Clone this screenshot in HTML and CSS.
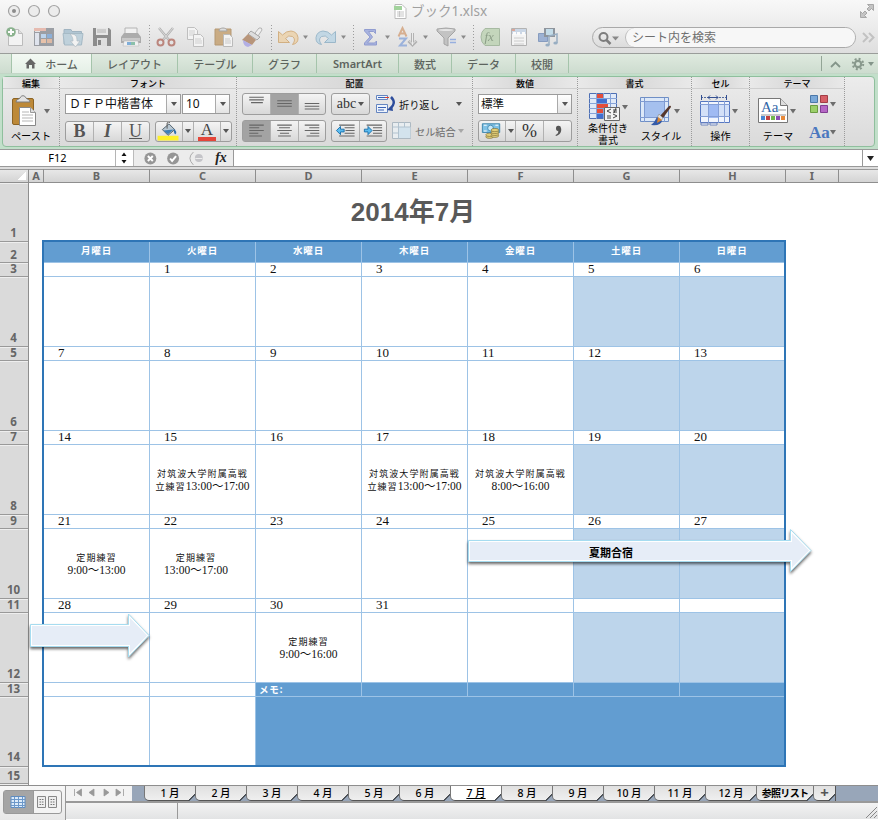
FILE: index.html
```html
<!DOCTYPE html>
<html lang="ja">
<head>
<meta charset="utf-8">
<title>ブック1.xlsx</title>
<link rel="stylesheet" href="styles.css">
</head>
<body>
<div class="window">
  <header class="chrome">
    <div class="titlebar">
      <svg width="70" height="22" viewBox="0 0 70 22"><g fill="#ececec" stroke="#a3a3a3" stroke-width="1.2"><circle cx="14" cy="11" r="5.5"/><circle cx="34" cy="11" r="5.5"/><circle cx="54" cy="11" r="5.5"/></g><circle cx="14" cy="11" r="2" fill="#8c8c8c"/></svg>
      <div class="doc-title">
        <svg width="14" height="16" viewBox="393 3 14 16"><path d="M395 4.500h7l4 4v10h-11z" fill="#fff" stroke="#bbb"/><path d="M394 6h8v4h-8z" fill="#a2d29c"/><path d="M397 12h7M397 14h7M397 16h7M399.500 11v6" stroke="#c6c6c6"/></svg>
        <span>ブック1.xlsx</span>
      </div>
      <svg width="24" height="22" viewBox="854 0 24 22"><path d="M867.500 4.500h6v6l-2-2-2.500 2.500-2-2 2.500-2.500zM860.500 11.500v6h6l-2-2 2.500-2.500-2-2-2.500 2.500z" fill="#c4c4c4" stroke="#999" stroke-width=".8"/></svg>
    </div>
    <div class="toolbar">
      <svg width="29" height="31" viewBox="0 22 29 31"><path d="M8.500 29.500h10l4 4v12h-14z" fill="#f6f6f6" stroke="#b5b5b5"/><path d="M18.500 29.500v4h4" fill="#ddd" stroke="#b5b5b5"/><circle cx="11" cy="32" r="4.800" fill="#7aa97e"/><path d="M11 29v6M8 32h6" stroke="#fff" stroke-width="2"/></svg>
      <svg width="29" height="31" viewBox="29 22 29 31"><path d="M34 28h20v18H34z" fill="#8e9299"/><path d="M35 29h5v3h-5z" fill="#e5e5e5"/><path d="M34 28h12v3H34z" fill="#e6b3a6"/><path d="M35 33h4v12h-4z" fill="#dfe4ef"/><path d="M41 34h5v4h-5z" fill="#b4d0ee"/><path d="M47 34h5v4h-5z" fill="#7da6d5"/><path d="M41 39h5v4h-5z" fill="#e8bda0"/><path d="M47 39h5v4h-5z" fill="#dbb29a"/></svg>
      <svg width="29" height="31" viewBox="58 22 29 31"><path d="M64 31v-1.500h7l1 2h9.500V44H64z" fill="#a8c0d0" stroke="#94abbb"/><path d="M63 33.500h20L81.500 45h-17z" fill="#b9ceda" stroke="#9bb2c0"/><path d="M70 34c6 0 7 2 7 7h3l-4.500 6-5-6H73c0-3-1-5-3-7z" fill="#f5f5f5" stroke="#a6b3bb" stroke-width=".7"/></svg>
      <svg width="29" height="31" viewBox="87 22 29 31"><path d="M93 28h16l2 2v16H93z" fill="#7e7e7e"/><path d="M96 28h12v7H96z" fill="#e6e6e6"/><path d="M97 30h9M97 32h9" stroke="#aaa"/><path d="M97 38h10v8H97z" fill="#ddd"/><path d="M98 40h3v5h-3z" fill="#777"/></svg>
      <svg width="29" height="31" viewBox="116 22 29 31"><path d="M125 28h12v8h-12z" fill="#f3f3f3" stroke="#aaa"/><path d="M124 33h14l3 4v6h-20v-6z" fill="#a2a2a2"/><path d="M122 38h18v3h-18z" fill="#c4c4c4"/><path d="M124 41h14l1 5h-16z" fill="#f4f4f4" stroke="#aaa" stroke-width=".5"/><path d="M127 42h4v3h-4z" fill="#6fa5d8"/><path d="M131 42h4v3h-4z" fill="#7cbaa1"/></svg>
      <svg width="7" height="31" viewBox="145 22 7 31"><path class="dots" d="M149.500 25v25"/></svg>
      <svg width="29" height="31" viewBox="152 22 29 31"><path d="M159 28l10 12M173 28l-10 12" stroke="#a9a9a9" stroke-width="2.500"/><path d="M159 28l10 12M173 28l-10 12" stroke="#e5e5e5" stroke-width=".8"/><g fill="none" stroke="#b5766c" stroke-width="2"><ellipse cx="160.500" cy="42.500" rx="3" ry="3"/><ellipse cx="171.500" cy="42.500" rx="3" ry="3"/></g></svg>
      <svg width="29" height="31" viewBox="181 22 29 31"><g fill="#f6f6f6" stroke="#b8b8b8"><path d="M187.500 27.500h7l3 3v9h-10z"/><path d="M193.500 34.500h7l3 3v9h-10z"/></g><path d="M189 31h6M189 33h6M189 35h4M195 39h6M195 41h7M195 43h7" stroke="#ccc"/></svg>
      <svg width="29" height="31" viewBox="210 22 29 31"><path d="M215 29h16v16h-16z" fill="#c5a273" stroke="#ac8b60"/><path d="M219 31c0-4 8-4 8 0z" fill="#ddd" stroke="#999"/><path d="M223.500 34.500h6l3 3v9h-9z" fill="#f6f6f6" stroke="#b4b4b4"/><path d="M225 39h5M225 41h6M225 43h6" stroke="#c5c5c5"/></svg>
      <svg width="28" height="31" viewBox="239 22 28 31"><path d="M255 33l4-5q3-1 3 2l-4 6z" fill="#f0f0f0" stroke="#aaa"/><path d="M251 31l9 6-3 3-9-6z" fill="#ddd" stroke="#9b9b9b"/><path d="M248 34l8 6-4 5-10-5z" fill="#b08868"/><path d="M243 40l9 5-4 2q-5-1-5-7z" fill="#aaa6e5"/></svg>
      <svg width="7" height="31" viewBox="267 22 7 31"><path class="dots" d="M271.500 25v25"/></svg>
      <svg width="28" height="31" viewBox="274 22 28 31"><path d="M278.500 31.500v11h11l-4-4q3-4 7-2 4 3 0 8 6-1 5.500-7-1-6-7-6.500-5 0-8.500 4z" fill="#ecd2ab" stroke="#cfa772"/></svg>
      <svg width="8" height="31" viewBox="302 22 8 31"><path class="caret" d="M303 35.500h5l-2.500 3.500z"/></svg>
      <svg width="30" height="31" viewBox="310 22 30 31"><path d="M335.500 31.500v11h-11l4-4q-3-4-7-2-4 3 0 8-6-1-5.500-7 1-6 7-6.500 5 0 8.500 4z" fill="#bcd5e4" stroke="#8fb0c5"/></svg>
      <svg width="8" height="31" viewBox="340 22 8 31"><path class="caret" d="M341 35.500h5l-2.500 3.500z"/></svg>
      <svg width="10" height="31" viewBox="348 22 10 31"><path class="dots" d="M353.500 25v25"/></svg>
      <svg width="24" height="31" viewBox="358 22 24 31"><path d="M364.500 29.500h11v4l-2-2h-5l4 5.500-5 6h7l2-2v4h-12v-2l5.500-6-5.500-6z" fill="#9daade" stroke="#8290cc"/></svg>
      <svg width="10" height="31" viewBox="382 22 10 31"><path class="caret" d="M385 35.500h5l-2.500 3.500z"/></svg>
      <svg width="29" height="31" viewBox="392 22 29 31"><path d="M398.500 36.500l4-8.500 4 8.500M400 33.500h5" fill="none" stroke="#d3a581" stroke-width="2"/><path d="M399 38.500h7l-6 7h7" fill="none" stroke="#8faada" stroke-width="2"/><path d="M412.500 33v12m-4-4l4 4 4-4" fill="none" stroke="#aaa" stroke-width="3"/><path d="M412.500 33v12m-3-4l3 3 3-3" fill="none" stroke="#eee"/></svg>
      <svg width="9" height="31" viewBox="421 22 9 31"><path class="caret" d="M423 35.500h5l-2.500 3.500z"/></svg>
      <svg width="29" height="31" viewBox="430 22 29 31"><path d="M437 29q9-2 18 0v2l-7 7v8l-4-2v-6l-7-7z" fill="#bdbdbd" stroke="#999"/><ellipse cx="446" cy="30" rx="7" ry="1" fill="#e5e5e5"/><path d="M450 39.500h6M450 42.500h6" stroke="#8aa6df" stroke-width="1.700"/></svg>
      <svg width="9" height="31" viewBox="459 22 9 31"><path class="caret" d="M461 35.500h5l-2.500 3.500z"/></svg>
      <svg width="11" height="31" viewBox="468 22 11 31"><path class="dots" d="M473.500 25v25"/></svg>
      <svg width="22" height="31" viewBox="479 22 22 31"><path d="M485 28.500h14.500v17H485q-4-3-4-8.500t4-8.500z" fill="#bed3b5" stroke="#9cb296"/><text x="484.500" y="41" class="fx-green">fx</text></svg>
      <svg width="35" height="31" viewBox="501 22 35 31"><path d="M511.500 28.500h15v17h-15z" fill="#f7f7f7" stroke="#aaa"/><path d="M512 29h14v5h-14z" fill="#c6d4e6"/><path d="M512 29h3v2h-3z" fill="#d99b8b"/><path d="M513 32h3v3h-3zm4 0h3v3h-3zm5 0h3v3h-3z" fill="#fff"/><path d="M514 38h10M514 41h10M514 44h10" stroke="#c8c8c8"/></svg>
      <svg width="24" height="31" viewBox="536 22 24 31"><path d="M538.500 33.500h9v8h-9z" fill="#91a9d0" stroke="#7790b9"/><path d="M544 28h11v9h-11z" fill="#7f8790"/><path d="M546 29h7v6h-7z" fill="#bddae9"/><path d="M549 45V36l8-2v9" fill="none" stroke="#8ca5bd" stroke-width="1.500"/><ellipse cx="547.500" cy="45" rx="2.200" ry="1.500" fill="#8ca5bd"/><ellipse cx="555.500" cy="43" rx="2.200" ry="1.500" fill="#8ca5bd"/></svg>
      <div class="search">
        <svg width="32" height="20" viewBox="592 27 32 20"><circle cx="602.500" cy="36" r="4" fill="none" stroke="#7d7d7d" stroke-width="2"/><path d="M605.500 39l4 4" stroke="#7d7d7d" stroke-width="2.500"/><path d="M611 35.500h7l-3.500 4z" fill="#888"/></svg>
        <div class="search-field">シート内を検索</div>
      </div>
      <svg width="21" height="31" viewBox="857 22 21 31"><path d="M863 33l4.500 4.500-4.500 4.500M869 33l4.500 4.500-4.500 4.500" fill="none" stroke="#bcbcbc" stroke-width="2"/></svg>
    </div>
  </header>

  <nav class="tabs">
    <div class="tab t0"></div>
    <div class="tab t1 active"><svg width="11" height="11" viewBox="0 0 11 11"><path d="M5.500.5L0 6h1.500v4.500H4V7h3v3.500h2.500V6H11z" fill="#666"/></svg>ホーム</div>
    <div class="tab t2">レイアウト</div>
    <div class="tab t3">テーブル</div>
    <div class="tab t4">グラフ</div>
    <div class="tab t5 latin">SmartArt</div>
    <div class="tab t6">数式</div>
    <div class="tab t7">データ</div>
    <div class="tab t8">校閲</div>
    <svg class="tab-tools" width="58" height="20" viewBox="820 54 58 20"><path d="M821.500 56v15" stroke="#93a596"/><path d="M831 67l4.500-4.500 4.500 4.500" fill="none" stroke="#84958a" stroke-width="1.800"/><circle cx="858" cy="64" r="3.200" fill="none" stroke="#89998d" stroke-width="2.200"/><circle cx="858" cy="64" r="5.200" fill="none" stroke="#89998d" stroke-width="2" stroke-dasharray="2 2.080"/><path d="M868 62h6l-3 4z" fill="#84958a"/></svg>
  </nav>

  <section class="ribbon">
    <div class="panel">
      <div class="group g1"><h2>編集</h2>
        <div class="paste"><svg width="48" height="34" viewBox="7 94 48 34"><rect x="12.500" y="98.500" width="21" height="26" rx="1.500" fill="#bd8938" stroke="#8c6425"/><path d="M16 102c0-3 4-3 4-4 1-3 5-3 6 0 0 1 4 1 4 4z" fill="#e2e2e2" stroke="#7d7d7d"/><path d="M19.500 107.500h11l5 5v13h-16z" fill="#fff" stroke="#888"/><path d="M30.500 107.500v5h5" fill="#ddd" stroke="#999"/><path d="M22 112h7M22 115h11M22 118h11M22 121h11" stroke="#b5b5b5"/><path class="arrow" d="M44 109h6l-3 4.500z"/></svg><span>ペースト</span></div>
      </div>
      <div class="group g2"><h2>フォント</h2>
        <div class="line"><div class="combo font-name"><span>ＤＦＰ中楷書体</span><i></i></div><div class="combo font-size"><span>10</span><i></i></div></div>
        <div class="line second">
          <div class="buttons"><b class="w28 serif">B</b><b class="w28 serif italic">I</b><b class="w27 serif under">U</b></div>
          <div class="buttons"><b class="w27"><svg width="26" height="20" viewBox="155 121 26 20"><path d="M156 135.500h22v5h-22z" fill="#fdf02c"/><path d="M161 129l7-6 6 6-7 6z" fill="#b8c7d2" stroke="#50616d"/><path d="M162 130l11-1-6 5z" fill="#3d7fb9"/><path d="M173 128q4 3 2 6-2 0-2-6z" fill="#2e6faf"/><path d="M166 128v-6q2-2 3 0" fill="none" stroke="#555"/></svg></b><b class="w11"><i></i></b><b class="w27 serif red"><span>A</span></b><b class="w10"><i></i></b></div>
        </div>
      </div>
      <div class="group g3"><h2>配置</h2>
        <div class="line">
          <div class="buttons tall"><b class="w28"><svg width="28" height="22" viewBox="0 0 28 22"><path class="bars" d="M6 3.500h16M6 6.500h16M8 9.500h13"/></svg></b><b class="w28 pressed"><svg width="28" height="22" viewBox="0 0 28 22"><path class="bars" d="M6 7.500h16M6 10.500h16M6 13.500h16"/></svg></b><b class="w26"><svg width="28" height="22" viewBox="0 0 28 22"><path class="bars" d="M6 10.500h16M6 13.500h16M6 16.500h16"/></svg></b></div>
          <div class="buttons tall"><b class="w38 abc">abc<i></i></b></div>
          <svg class="wrap-icon" width="22" height="22" viewBox="375 93 22 22"><path d="M376.500 95.500h11v4h-11zM376.500 104.500h11v8h-11z" fill="#eef4fc" stroke="#6585c0"/><path d="M378 97.500h8M378 107.500h8M378 110h6" stroke="#3a62b5"/><path d="M385 97.500h4" stroke="#d43"/><path d="M391 97q6 6-1 12" fill="none" stroke="#2d4d9c" stroke-width="2.500"/><path d="M387 110l5-5 1 6z" fill="#2d4d9c"/></svg>
          <span class="cmd">折り返し</span><i class="tri far"></i>
        </div>
        <div class="line second">
          <div class="buttons tall"><b class="w28 pressed"><svg width="28" height="22" viewBox="0 0 28 22"><path class="bars" d="M6 4.500h16M6 7.500h11M6 10.500h16M6 13.500h10M6 16.500h14"/></svg></b><b class="w28"><svg width="28" height="22" viewBox="0 0 28 22"><path class="bars" d="M6 4.500h16M8 7.500h12M6 10.500h16M9 13.500h10M7 16.500h14"/></svg></b><b class="w26"><svg width="28" height="22" viewBox="0 0 28 22"><path class="bars" d="M6 4.500h16M11 7.500h11M6 10.500h16M12 13.500h10M8 16.500h14"/></svg></b></div>
          <div class="buttons tall"><b class="w28"><svg width="28" height="22" viewBox="0 0 28 22"><path class="bars" d="M7 4.500h17M13 7.500h11M14 10.500h10M13 13.500h11M7 16.500h17"/><path d="M4 10.500l4.500-4.500v3h4v3h-4v3z" fill="#5bbcf0" stroke="#176ca8"/></svg></b><b class="w26"><svg width="28" height="22" viewBox="0 0 28 22"><path class="bars" d="M7 4.500h17M14 7.500h10M14 10.500h10M14 13.500h10M7 16.500h17"/><path d="M13 10.500l-4.500-4.500v3h-4v3h4v3z" fill="#5bbcf0" stroke="#176ca8"/></svg></b></div>
          <svg class="merge-icon" width="20" height="18" viewBox="0 0 20 18"><path d="M.5.5h18v16H.5z" fill="#e8edf0" stroke="#adb9c2"/><path d="M6.500 5h12v11h-12z" fill="#d3e3ed"/><path d="M.5 5h18M6.500.5v16M12.500.5V5M.5 11h6" stroke="#b1c2cf"/></svg>
          <span class="cmd dim">セル結合</span><i class="tri dim"></i>
        </div>
      </div>
      <div class="group g4"><h2>数値</h2>
        <div class="line"><div class="combo number"><span>標準</span><i></i></div></div>
        <div class="line second"><div class="buttons tall"><b class="w27"><svg width="27" height="20" viewBox="478 121 27 20"><path d="M481.500 123.500h18v9h-18z" fill="#7fc2e6" stroke="#3f86ad"/><ellipse cx="490" cy="128" rx="3" ry="3" fill="#c8e9f7" stroke="#4a8eb5"/><path d="M483 125h3M483 131h3M495 125h3" stroke="#fff"/><g fill="#e2cf79" stroke="#80713a" stroke-width=".7"><ellipse cx="489" cy="137" rx="4" ry="1.700"/><ellipse cx="489" cy="135" rx="4" ry="1.700"/><ellipse cx="494.500" cy="136" rx="4" ry="1.700"/><ellipse cx="494.500" cy="134" rx="4" ry="1.700"/><ellipse cx="494.500" cy="132" rx="4" ry="1.700"/><ellipse cx="494.500" cy="130" rx="4" ry="1.700"/></g></svg></b><b class="w10"><i></i></b><b class="w28 percent">%</b><b class="w27"><svg width="10" height="12" viewBox="0 0 10 12"><path d="M3 3.500a2.500 2.500 0 0 1 5-.5c1 3.500-1 7-5 8-.8-.6-.3-1 0-1.200 2-1 2.500-2.300 2.200-4C4 6.200 3 5 3 3.500z" fill="#555"/></svg></b></div></div>
      </div>
      <div class="group g5"><h2>書式</h2>
        <div class="pair">
          <div class="big two"><svg width="50" height="30" viewBox="583 93 50 30"><path d="M589.500 94.500h27v25h-27z" fill="#e1eaf8" stroke="#4e70b4"/><path d="M589 99.500h28M589 104.500h28M589 109.500h28M589 114.500h28M596.500 94v26M603.500 94v26M610.500 94v26" stroke="#86a3d8"/><path d="M597 95h6v4h-6zM597 105h11v4h-11z" fill="#e44d3b"/><path d="M597 100h10v4h-10zM597 115h6v4h-6z" fill="#426fd0"/><path d="M597 110h6v4h-6z" fill="#e44d3b"/><path d="M604.500 108.500h15v13h-15z" fill="#f4f4f4" stroke="#666"/><path d="M611 110l-4 2 4 2M613 111h4M613 113h4M616 109l-2 5M607 117h4M607 119h4M613 115l4 2-4 2" fill="none" stroke="#333" stroke-width=".9"/><path class="arrow" d="M622 106h6l-3 4.500z"/></svg><span>条件付き</span><span>書式</span></div>
          <div class="big style"><svg width="46" height="34" viewBox="639 94 46 34"><path d="M641.500 97.500h28v24h-28z" fill="#dce8f8" stroke="#6f8fc6"/><path d="M646 102h19v15h-19z" fill="#a5c0ee"/><path d="M641 101.500h28M641 117.500h28M645.500 98v24M665.500 98v24" stroke="#7f9bd2"/><path d="M672 107l-8 11-3-2 9-10q2-1 2 1z" fill="#57382c"/><path d="M660 114l4 4-2 3-4-3z" fill="#ddd" stroke="#777" stroke-width=".5"/><path d="M658 117l5 4q-1 5-11 4 4-3 6-8z" fill="#345ba8"/><path d="M659 117l4 3-5 3z" fill="#dd8730"/><path class="arrow" d="M675 109h6l-3 4.500z"/></svg><span>スタイル</span></div>
        </div>
      </div>
      <div class="group g6"><h2>セル</h2>
        <div class="big cell"><svg width="44" height="34" viewBox="699 94 44 34"><path d="M701 97.500h26" stroke="#536b9f" stroke-dasharray="2 1"/><path d="M708 97.500h10M710 95.500l-2 2 2 2M716 95.500l2 2-2 2M701.500 95v5M726.500 95v5" fill="none" stroke="#334f91"/><path d="M700.500 101.500h29v21h-29z" fill="#f1f5fd" stroke="#5677c1"/><path d="M701 104.500h28v12h-28z" fill="#d3e0f8"/><path d="M709 104h9v14h-9z" fill="#9fbaf3"/><path d="M700 104.500h30M700 116.500h30M708.500 101v22M718.500 101v22M724.500 101v22" stroke="#859fd6"/><path d="M701 123h7v2h-7zM710 123h7v2h-7z" fill="#fff" stroke="#6d84bd"/><path class="arrow" d="M732 109h6l-3 4.500z"/></svg><span>操作</span></div>
      </div>
      <div class="group g7"><h2>テーマ</h2>
        <div class="pair">
          <div class="big theme"><svg width="46" height="34" viewBox="755 94 46 34"><path d="M758.500 98.500h22l7 7v17h-29z" fill="#fff" stroke="#777"/><path d="M780.500 98.500v7h7" fill="#ddd" stroke="#777"/><text x="761" y="112" class="theme-aa">Aa</text><path d="M778 110h8M761 115h25" stroke="#ccc" stroke-width="2"/><path d="M761 116h4v4h-4z" fill="#4a87d3"/><path d="M766 116h4v4h-4z" fill="#c34242"/><path d="M771 116h4v4h-4z" fill="#72b84e"/><path d="M776 116h4v4h-4z" fill="#8b4fb4"/><path d="M781 116h4v4h-4z" fill="#e88a3a"/><path class="arrow" d="M790 109h6l-3 4.500z"/></svg><span>テーマ</span></div>
          <svg class="theme-side" width="36" height="57" viewBox="803 89 36 57"><g stroke-width="1"><path d="M810.500 95.500h7v7h-7z" fill="#7ba9d9" stroke="#4c78a9"/><path d="M820.500 95.500h7v7h-7z" fill="#d65e66" stroke="#a13d45"/><path d="M810.500 105.500h7v7h-7z" fill="#9bcf69" stroke="#6b9b42"/><path d="M820.500 105.500h7v7h-7z" fill="#b567c5" stroke="#813e91"/></g><path class="arrow" d="M830 102h6l-3 4.500zM830 130h6l-3 4.500z"/><text x="809" y="138" class="fonts-aa">Aa</text></svg>
        </div>
      </div>
    </div>
  </section>

  <div class="formula">
    <div class="name-box">F12</div>
    <svg width="17" height="16" viewBox="116 150 17 16"><path d="M121.500 156l2.500-3.500 2.500 3.500zM121.500 160l2.500 3.500 2.500-3.500z" fill="#111"/></svg>
    <svg class="fx-tools" width="100" height="16" viewBox="134 150 100 16"><circle cx="150.500" cy="158.500" r="6" fill="#969696"/><path d="M148 156l5 5M153 156l-5 5" stroke="#fff" stroke-width="2"/><circle cx="173.500" cy="158.500" r="6" fill="#969696"/><path d="M170.500 158.500l2 2.500 4-5" fill="none" stroke="#fff" stroke-width="2"/><path d="M194 152q-7 6 0 13" fill="none" stroke="#aaa"/><circle cx="199.500" cy="158" r="4" fill="#c4c4c8"/><path d="M196 158.500h7" stroke="#eee"/><text x="216" y="162" class="fx">fx</text></svg>
    <div class="formula-input"></div>
    <svg width="15" height="16" viewBox="863 150 15 16"><path d="M867 156h7l-3.500 5z" fill="#222"/></svg>
  </div>

  <div class="colheads">
    <div class="corner"></div><div class="ca">A</div><div class="cc">B</div><div class="cc">C</div><div class="cc">D</div><div class="cc">E</div><div class="cc">F</div><div class="cc">G</div><div class="cc">H</div><div class="ci">I</div><div class="cj"></div>
  </div>

  <main class="sheet">
    <div class="rowheads">
      <div>1</div><div>2</div><div>3</div><div>4</div><div>5</div><div>6</div><div>7</div><div>8</div><div>9</div><div>10</div><div>11</div><div>12</div><div>13</div><div>14</div><div>15</div><div></div>
    </div>
    <div class="canvas">
      <h1>2014年7月</h1>
      <div class="calendar">
        <div class="hd">月曜日</div><div class="hd">火曜日</div><div class="hd">水曜日</div><div class="hd">木曜日</div><div class="hd">金曜日</div><div class="hd">土曜日</div><div class="hd">日曜日</div>
        <div class="d"></div><div class="d">1</div><div class="d">2</div><div class="d">3</div><div class="d">4</div><div class="d">5</div><div class="d">6</div>
        <div class="e"></div><div class="e"></div><div class="e"></div><div class="e"></div><div class="e"></div><div class="e we"></div><div class="e we"></div>
        <div class="d">7</div><div class="d">8</div><div class="d">9</div><div class="d">10</div><div class="d">11</div><div class="d">12</div><div class="d">13</div>
        <div class="e"></div><div class="e"></div><div class="e"></div><div class="e"></div><div class="e"></div><div class="e we"></div><div class="e we"></div>
        <div class="d">14</div><div class="d">15</div><div class="d">16</div><div class="d">17</div><div class="d">18</div><div class="d">19</div><div class="d">20</div>
        <div class="e"></div><div class="e"><p>対筑波大学附属高戦<br>立練習<span>13:00～17:00</span></p></div><div class="e"></div><div class="e"><p>対筑波大学附属高戦<br>立練習<span>13:00～17:00</span></p></div><div class="e"><p>対筑波大学附属高戦<br><span>8:00～16:00</span></p></div><div class="e we"></div><div class="e we"></div>
        <div class="d">21</div><div class="d">22</div><div class="d">23</div><div class="d">24</div><div class="d">25</div><div class="d">26</div><div class="d">27</div>
        <div class="e"><p>定期練習<br><span>9:00～13:00</span></p></div><div class="e left"><p>定期練習<br><span>13:00～17:00</span></p></div><div class="e"></div><div class="e"></div><div class="e"></div><div class="e we"></div><div class="e we"></div>
        <div class="d">28</div><div class="d">29</div><div class="d">30</div><div class="d">31</div><div class="d"></div><div class="d"></div><div class="d"></div>
        <div class="e"></div><div class="e"></div><div class="e"><p>定期練習<br><span>9:00～16:00</span></p></div><div class="e"></div><div class="e"></div><div class="e we"></div><div class="e we"></div>
        <div class="d"></div><div class="d"></div><div class="memo">メモ:</div><div class="memo"></div><div class="memo"></div><div class="memo"></div><div class="memo"></div>
        <div class="e last"></div><div class="e last"></div><div class="memo-body"></div>
      </div>
      <svg class="shape camp" width="354" height="56" viewBox="464 524 354 56"><path class="edge" d="M468.500 540.500H790.500V529.500L811 550.500 790.500 571.500V561.500H468.500z"/><path class="fill" d="M470 542H792V533.500L809 550.500 792 567.500V560H470z"/></svg>
      <div class="camp-label">夏期合宿</div>
      <svg class="shape cont" width="128" height="56" viewBox="26 608 128 56"><path class="edge" d="M30.500 624.500H128.500V614L149 635.500 128.500 657V646.500H30.500z"/><path class="fill" d="M32 626H130V618L147 635.500 130 653V645H32z"/></svg>
    </div>
  </main>

  <footer class="footer">
    <div class="views"><svg width="60" height="26" viewBox="0 0 60 26"><rect x=".5" y="1.500" width="58" height="23" rx="2.500" fill="#f3f3f3" stroke="#999"/><path d="M1 2h29v22H1z" fill="#a5a5a5"/><path d="M30.500 2v22" stroke="#999"/><path d="M8 7.500h14v11H8z" fill="#dcebfa" stroke="#5f8cc0"/><path d="M8 10.500h14M8 13.500h14M8 16.500h14M11.500 8v11M15.500 8v11M19.500 8v11" stroke="#6c98ca"/><path d="M34.500 7.500h8v11h-8zM45.500 7.500h8v11h-8z" fill="#eee" stroke="#888"/><path d="M36.500 10.500h4M36.500 13h4M36.500 15.500h4M47.500 10.500h4M47.500 13h4M47.500 15.500h4" stroke="#777" stroke-dasharray="1.600 .8"/></svg></div>
    <div class="right">
      <div class="sheettabs">
        <svg width="66" height="15" viewBox="66 786 66 15"><path d="M66 786h66v15H66z" fill="#f3f3f3"/><path d="M74.500 789v7M81.500 789v7l-5-3.500zM94 789v7l-5-3.500zM104 789v7l5-3.500zM116 789v7l5-3.500zM123.500 789v7" fill="#999" stroke="#999" stroke-width=".8"/></svg>
        <div class="strip">
          <div class="st">1 月</div><div class="st">2 月</div><div class="st">3 月</div><div class="st">4 月</div><div class="st">5 月</div><div class="st">6 月</div><div class="st on">7 月</div><div class="st">8 月</div><div class="st">9 月</div><div class="st">10 月</div><div class="st">11 月</div><div class="st">12 月</div><div class="st list">参照リスト</div><div class="st plus">+</div>
        </div>
      </div>
      <div class="status"><div class="s1"></div><div class="s2"><svg width="13" height="13" viewBox="0 0 13 13"><path d="M1 12L12 1M5 12l7-7M9 12l3-3" stroke="#888"/></svg></div></div>
    </div>
  </footer>
</div>
</body>
</html>
```
FILE: styles.css
```css
* { box-sizing: border-box; }
body { margin: 0; font-family: "Noto Sans", "Noto Sans CJK JP", sans-serif; }
svg { display: block; flex: none; }
i { font-style: normal; }
.window { width: 878px; height: 820px; overflow: hidden; display: flex; flex-direction: column; background: #fff; }
.window > * { flex: none; }

.chrome { height: 54px; background: linear-gradient(#f8f8f8, #ececec 50%, #dedede); border-bottom: 1px solid #9a9d9a; }
.titlebar { height: 22px; display: flex; }
.titlebar > svg:last-child { margin-left: auto; }
.doc-title { display: flex; align-items: center; gap: 4px; font: 13.5px/22px "Noto Sans", "Noto Sans CJK JP", sans-serif; color: #a0a0a0; margin-left: 323px; white-space: nowrap; }
.toolbar { height: 31px; display: flex; }
.toolbar > svg { opacity: .85; }
.dots { stroke: #8f8f8f; stroke-dasharray: 1 2; }
.caret { fill: #7a7a7a; }
.arrow { fill: #6d6d6d; }
.fx-green { font: italic 13px "Liberation Serif", serif; fill: #7d9278; }
.search { margin: 5px 0 0 32px; width: 264px; height: 21px; border: 1px solid #a9a9a9; border-radius: 11px; display: flex; background: linear-gradient(#efefef, #dcdcdc); }
.search-field { flex: 1; border-left: 1px solid #bbb; border-radius: 10px; background: #f7f7f7; font-size: 12px; line-height: 20px; padding-left: 6px; color: #6e6e6e; }
.toolbar > svg:last-child { margin-left: 1px; }

.tabs { height: 20px; display: flex; background: linear-gradient(#dfeadf, #cddccf); font-size: 11px; font-weight: 500; color: #5d645e; border-bottom: 1px solid #c3d6c7; }
.tab { display: flex; align-items: center; justify-content: center; border-right: 1px solid #a5c4ab; white-space: nowrap; }
.tab.active { background: linear-gradient(#f3f9f3, #e4efe6); gap: 9px; }
.t0 { width: 12px; } .t1 { width: 80px; } .t2 { width: 86px; } .t3 { width: 75px; } .t4 { width: 64px; } .t5 { width: 82px; } .t6 { width: 53px; } .t7 { width: 64px; } .t8 { width: 53px; }
.latin { font-weight: 600; }
.tab-tools { margin-left: auto; }

.ribbon { height: 76px; background: #c2dfca; padding: 2px 3px 2px 2px; border-bottom: 1px solid #9a9a9a; }
.panel { height: 71px; border: 1px solid #8fbf9d; border-radius: 4px; display: flex; background: linear-gradient(#ececec, #dadada); }
.group { height: 69px; display: flex; flex-direction: column; border-right: 1px dotted #9a9a9a; }
.group h2 { margin: 0; height: 12px; flex: none; font-size: 9px; line-height: 13px; font-weight: 500; text-align: center; color: #000; border-bottom: 1px solid #cfcfcf; background: linear-gradient(90deg, #e9e9e9, #d8d8d8 50%, #e9e9e9); }
.g1 { width: 57px; } .g2 { width: 177px; } .g3 { width: 236px; } .g4 { width: 105px; } .g5 { width: 114px; } .g6 { width: 58px; } .g7 { width: 95px; }
.line { display: flex; height: 22px; margin: 4px 0 0 5px; align-items: center; flex: none; }
.line.second { margin-top: 5px; }
.combo { height: 20px; border: 1px solid #9b9b9b; background: #fff; display: flex; font-size: 12px; line-height: 18px; color: #111; white-space: nowrap; }
.combo span { flex: 1; padding-left: 3px; }
.combo i { width: 14px; flex: none; border-left: 1px solid #aaa; background: linear-gradient(#fff, #e3e3e3); display: flex; align-items: center; justify-content: center; }
.combo i::after, .buttons i::after, .tri::after { content: ""; display: block; width: 0; height: 0; border: 3px solid transparent; border-top: 4px solid #555; border-bottom: 0; }
.font-name { width: 116px; } .font-size { width: 48px; margin-left: 1px; }
.number { width: 94px; }
.number span { line-height: 17px; font-size: 11.5px; padding-left: 2px; }
.buttons { display: flex; height: 21px; border: 1px solid #9d9d9d; border-radius: 3px; background: linear-gradient(#f4f4f4, #d8d8d8); flex: none; }
.buttons + .buttons { margin-left: 5px; }
.buttons.tall { height: 22px; }
.buttons b { display: flex; align-items: center; justify-content: center; border-right: 1px solid #b1b1b1; font-weight: 400; flex: none; }
.buttons b:last-child { border-right: 0; }
.buttons b > svg { max-width: 100%; max-height: 100%; }
.w28 { width: 28px; } .w27 { width: 27px; } .w26 { width: 26px; } .w11 { width: 11px; } .w10 { width: 10px; } .w38 { width: 37px; }
.buttons b.serif { font: bold 18px/19px "Liberation Serif", serif; color: #555; }
.buttons b.italic { font-style: italic; }
.buttons b.under { font-weight: 400; text-decoration: underline; }
.buttons b.red { flex-direction: column; font-weight: 400; font-size: 17px; color: #444; }
.red span { border-bottom: 4px solid #e4463a; line-height: 15px; padding: 0 3px; }
.buttons b.pressed { background: #a3a3a3; }
.bars { stroke: #666; stroke-width: 1.2; }
.buttons b.abc { font: 14px "Liberation Serif", serif; color: #333; gap: 2px; }
.wrap-icon { margin-left: 5px; }
.cmd { font-size: 10.2px; margin-left: 2px; white-space: nowrap; color: #111; }
.cmd.dim { color: #6b6b6b; margin-left: 3px; }
.tri { display: flex; margin-left: 5px; }
.tri.far { margin-left: 16px; }
.tri.dim { opacity: .4; margin-left: 2px; }
.merge-icon { margin-left: 5px; }
.buttons b.percent { font: 18px "Liberation Serif", serif; color: #333; }
.paste, .big { display: flex; flex-direction: column; align-items: center; font-size: 10.2px; line-height: 12px; color: #000; white-space: nowrap; text-align: center; }
.paste { margin-top: 5px; }
.paste span, .big span { margin-top: 2px; }
.pair { display: flex; }
.big { margin-top: 5px; }
.big.two { margin-top: 3px; width: 54px; margin-left: 3px; font-family: "Noto Sans CJK JP", sans-serif; font-size: 10px; }
.big.two span { line-height: 12px; margin-top: 0; }
.big.style { margin-left: 3px; }
.big.theme { margin-left: 5px; }
.theme-side { margin-left: 2px; }
.theme-aa { font: 15px "Liberation Serif", serif; fill: #3467a8; }
.fonts-aa { font: bold 17px "Liberation Serif", serif; fill: #4b78bf; }

.formula { height: 17px; display: flex; border-bottom: 1px solid #999; background: #fff; }
.name-box { width: 116px; border-right: 1px solid #b5b5b5; font-size: 11px; line-height: 16px; text-align: center; }
.fx-tools { background: #ececec; border-left: 1px solid #bbb; }
.fx { font: italic bold 14px "Liberation Serif", serif; fill: #222; }
.formula-input { flex: 1; border-left: 1px solid #999; border-right: 1px solid #999; }

.colheads { height: 16px; display: flex; background: linear-gradient(#e9e9e9, #d4d4d4); border-top: 2px solid #ddd; border-bottom: 1px solid #8e8e8e; font: bold 11px/14px "Noto Sans", sans-serif; color: #666; text-align: center; box-shadow: inset 0 1px #999; }
.colheads div { border-right: 1px solid #8e8e8e; }
.corner { width: 29px; background: linear-gradient(135deg, transparent 50%, #fff 51%) 17px 2px / 9px 9px no-repeat; }
.ca { width: 15px; } .cc { width: 106px; } .ci { width: 53px; } .colheads .cj { width: 39px; border-right: 0; }

.sheet { height: 602px; display: flex; }
.rowheads { width: 29px; flex: none; border-right: 1px solid #8e8e8e; background: #dadada; display: grid; grid-template-rows: 59px 21px 14px 70px 14px 70px 14px 70px 14px 70px 14px 70px 14px 70px 17px 1fr; font: bold 11.5px/11px "Noto Sans", sans-serif; color: #666; }
.rowheads div { display: flex; align-items: flex-end; justify-content: center; border-bottom: 1px solid #999; padding: 0 1px 2px 0; box-shadow: inset 0 1px #eee; line-height: 11px; min-height: 0; }
.rowheads div:last-child { border-bottom: 0; }
.rowheads div:nth-child(1), .rowheads div:nth-child(2n+4) { padding-bottom: 3px; }
.rowheads div:nth-child(14) { padding-bottom: 4px; }
.rowheads div:nth-child(2) { padding-bottom: 2px; }
.canvas { position: relative; flex: 1; background: #fff; overflow: visible; }
h1 { margin: 0 0 0 13px; width: 742px; height: 57px; text-align: center; font: bold 26px/58px "Liberation Sans", "Noto Sans CJK JP", sans-serif; color: #595959; }
.calendar { margin-left: 13px; width: 744px; height: 527px; border: 2px solid #2e75b6; display: grid; grid-template-columns: repeat(6, 106px) 104px; grid-template-rows: 21px 14px 70px 14px 70px 14px 70px 14px 70px 14px 70px 14px 68px; }
.calendar > div { border-right: 1px solid #9dc3e6; border-bottom: 1px solid #9dc3e6; min-width: 0; min-height: 0; }
.calendar > div:nth-child(7n) { border-right: 0; }
.calendar > .hd { background: #629dd1; color: #fff; font: bold 9.5px/16px "Noto Sans CJK JP", sans-serif; letter-spacing: .8px; text-align: center; }
.d { padding-left: 14px; font: 13px/11px "Liberation Serif", serif; color: #111; }
.e { display: flex; align-items: center; justify-content: center; }
.e p { margin: 0; font: 9px/13px "Noto Sans CJK JP", sans-serif; letter-spacing: 1.1px; white-space: nowrap; text-align: center; color: #111; }
.e p span { font: 11.5px/13px "Liberation Serif", "Noto Sans CJK JP", serif; letter-spacing: 0; }
.e.left { padding-right: 13px; }
.we { background: #bdd5eb; }
.calendar > .memo { background: #629dd1; color: #fff; font: bold 9.5px/12px "Noto Sans CJK JP", sans-serif; letter-spacing: .8px; padding-left: 3px; }
.calendar > .last { border-bottom: 0; }
.calendar > .memo-body { grid-column: 3 / 8; background: #629dd1; border: 0; }
.shape { position: absolute; filter: drop-shadow(0 2px 1.5px rgba(0, 0, 0, .6)); }
.edge { fill: #fff; stroke: #a6dcf0; }
.fill { fill: #e6edf7; }
.camp { left: 435px; top: 341px; }
.cont { left: -3px; top: 425px; }
.camp-label { position: absolute; left: 439px; top: 361px; width: 286px; text-align: center; font: bold 11px/16px "Noto Sans CJK JP", sans-serif; }

.footer { height: 35px; display: flex; border-top: 1px solid #8e8e8e; }
.views { width: 66px; flex: none; border-right: 1px solid #999; background: linear-gradient(#f7f7f7, #e8e8e8); padding: 3px 0 0 3px; }
.right { flex: 1; }
.sheettabs { height: 17px; display: flex; background: #98a6b9; border-bottom: 2px solid #999; }
.strip { display: flex; margin-left: 12px; }
.st { position: relative; width: 51px; height: 15px; font: 500 10.5px/14px "Noto Sans", "Noto Sans CJK JP", sans-serif; text-align: center; background: linear-gradient(#e0e0e0, #efefef); border: 1px solid #555; border-top: 0; border-left-color: #777; border-right: 0; border-radius: 0 0 0 5px; color: #000; white-space: nowrap; }
.st::after { content: ""; position: absolute; right: 0; bottom: -1px; width: 7px; height: 7px; background: linear-gradient(135deg, transparent 44%, #444 46%, #55606e 60%, #98a6b9 64%); }
.st.on { background: #fff; text-decoration: underline; }
.st.list { width: 57px; font-size: 10px; letter-spacing: -.7px; font-weight: 700; }
.st.plus { width: 23px; font: bold 15px/13px "Noto Sans", sans-serif; color: #555; border-right: 1px solid #555; }
.status { height: 17px; display: flex; background: linear-gradient(#f3f3f3, #e2e3e4); border-bottom: 1px solid #fff; }
.s1 { width: 112px; border-right: 1px solid #999; }
.s2 { flex: 1; display: flex; justify-content: flex-end; align-items: flex-end; }
```
